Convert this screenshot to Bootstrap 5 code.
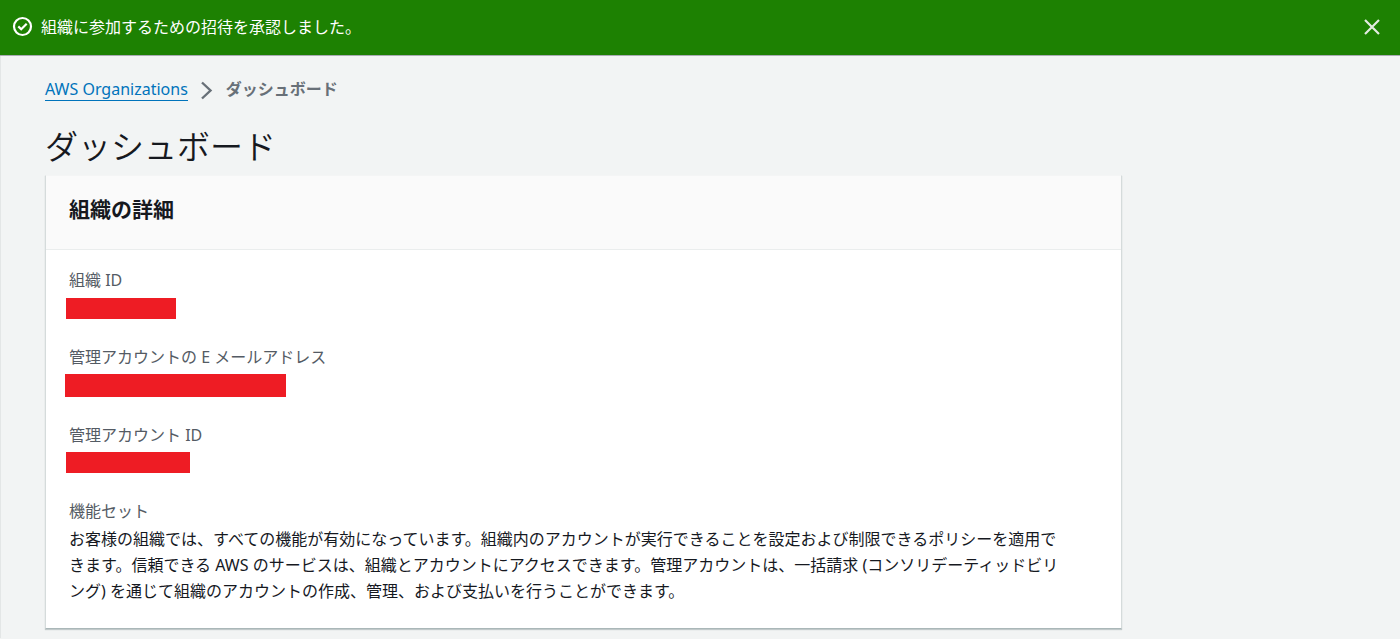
<!DOCTYPE html>
<html lang="ja">
<head>
<meta charset="utf-8">
<meta name="viewport" content="width=device-width, initial-scale=1">
<title>ダッシュボード - AWS Organizations</title>
<link href="https://cdn.jsdelivr.net/npm/bootstrap@5.3.0/dist/css/bootstrap.min.css" rel="stylesheet">
<style>
  body { font-family: "Noto Sans", "Noto Sans CJK JP", sans-serif; font-size: 16px; line-height: 26px; color: #16191f; background: #f2f4f4; }
  .flash-bar { background: #1d8102; color: #fff; min-height: 56px; padding: 0 20px 2px 12px; border-bottom: 1px solid #a9acb3; }
  .flash-close { color: #e3ebe1; line-height: 0; }
  .page-main { border-left: 1px solid #e3e6e6; padding: 20px calc(20% - 2px) 9px 44px; }
  .breadcrumb { --bs-breadcrumb-margin-bottom: 0; font-size: 16px; }
  .crumb-link { color: #0073bb; text-decoration: none; border-bottom: 1px solid #0073bb; line-height: 20px; }
  .crumb-arrow { padding: 2px 14px 0 16px; }
  .crumb-now { color: #687078; font-weight: 700; }
  .page-title { font-size: 33px; line-height: 40px; font-weight: 350; margin: 25px 0 8px; }
  .detail-card { border: 1px solid #d5dbdb; border-top-color: #f4f5f5; border-bottom-color: #aab7b8; border-radius: 0; box-shadow: 0 1px 1px rgba(0, 28, 36, .2); color: inherit; }
  .detail-card .card-header { background: #fafafa; border-bottom: 1px solid #eaeded; padding: 19px 23px 26px; border-radius: 0; }
  .detail-card .card-body { padding: 17px 23px 24px; }
  .section-title { font-size: 21px; line-height: 28px; font-weight: 700; }
  .detail-list { gap: 25px; }
  .detail-list dt { font-weight: 400; color: #545b64; }
  .detail-list dd { max-width: 1000px; margin: 2px 0 0; }
  .detail-list .redacted { background: #ee1c24; height: 21px; margin: 5px 0 0 -3px; }
  .detail-list .redacted-id { width: 110px; }
  .detail-list .redacted-mail { width: 221px; height: 23px; margin: 4px 0 0 -4px; }
  .detail-list .redacted-account { width: 124px; margin-top: 4px; }
</style>
</head>
<body>
<div class="flash-bar d-flex align-items-center justify-content-between" role="status">
  <div class="d-flex align-items-center gap-2">
    <svg width="21" height="21" viewBox="0 0 21 21" fill="none" stroke="currentColor" stroke-width="2.2" aria-hidden="true"><circle cx="10.500" cy="10.500" r="8.500"/><path d="M6.300 10.400 9.200 13.200 14.700 7.700"/></svg>
    <span>組織に参加するための招待を承認しました。</span>
  </div>
  <button type="button" class="flash-close btn p-0 border-0" aria-label="閉じる">
    <svg width="16" height="16" viewBox="0 0 16 16" fill="none" stroke="currentColor" stroke-width="2.200" aria-hidden="true"><path d="M1 1 15 15M15 1 1 15"/></svg>
  </button>
</div>
<main class="page-main">
  <nav aria-label="breadcrumb">
    <ol class="breadcrumb align-items-center">
      <li><a class="crumb-link" href="#">AWS Organizations</a></li>
      <li class="crumb-arrow d-flex" aria-hidden="true">
        <svg width="8" height="18" viewBox="0 0 8 18" fill="none" stroke="#687078" stroke-width="2.400" overflow="visible"><path d="M-2 1.500 6.500 9.500-2 17.500"/></svg>
      </li>
      <li class="crumb-now" aria-current="page">ダッシュボード</li>
    </ol>
  </nav>
  <h1 class="page-title">ダッシュボード</h1>
  <section class="card detail-card">
    <div class="card-header"><h2 class="section-title mb-0">組織の詳細</h2></div>
    <div class="card-body">
      <dl class="detail-list d-flex flex-column mb-0">
        <div><dt>組織 ID</dt><dd class="redacted redacted-id"></dd></div>
        <div><dt>管理アカウントの E メールアドレス</dt><dd class="redacted redacted-mail"></dd></div>
        <div><dt>管理アカウント ID</dt><dd class="redacted redacted-account"></dd></div>
        <div><dt>機能セット</dt><dd>お客様の組織では、すべての機能が有効になっています。組織内のアカウントが実行できることを設定および制限できるポリシーを適用できます。信頼できる AWS のサービスは、組織とアカウントにアクセスできます。管理アカウントは、一括請求 (コンソリデーティッドビリング) を通じて組織のアカウントの作成、管理、および支払いを行うことができます。</dd></div>
      </dl>
    </div>
  </section>
</main>
<script src="https://cdn.jsdelivr.net/npm/bootstrap@5.3.0/dist/js/bootstrap.bundle.min.js"></script>
</body>
</html>
